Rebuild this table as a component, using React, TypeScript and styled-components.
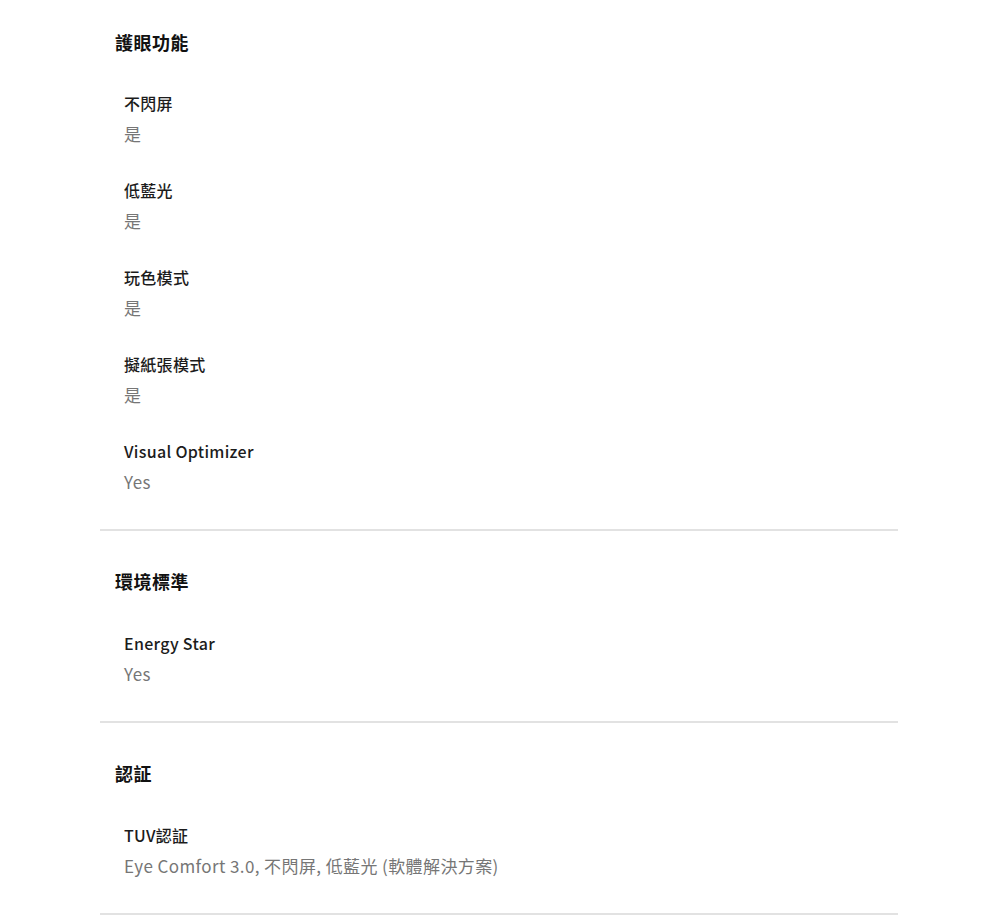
import React from 'react';
import styled, { createGlobalStyle } from 'styled-components';

// --- Data ---
const specSections = [
  {
    title: '護眼功能',
    items: [
      { label: '不閃屏', value: '是' },
      { label: '低藍光', value: '是' },
      { label: '玩色模式', value: '是' },
      { label: '擬紙張模式', value: '是' },
      { label: 'Visual Optimizer', value: 'Yes' },
    ],
  },
  {
    title: '環境標準',
    items: [{ label: 'Energy Star', value: 'Yes' }],
  },
  {
    title: '認証',
    items: [{ label: 'TUV認証', value: 'Eye Comfort 3.0, 不閃屏, 低藍光 (軟體解決方案)' }],
  },
];

// --- Styled Components ---
const GlobalStyle = createGlobalStyle`
  body {
    margin: 0;
    background: #fff;
    font-family: "Noto Sans CJK TC", "Noto Sans", sans-serif;
  }
`;

const Page = styled.div`
  width: 798px;
  margin-left: 100px;
`;

const Section = styled.section`
  padding: 36px 0 35px;
  border-bottom: 2px solid #e2e2e2;

  &:first-child {
    padding-top: 28px;
  }
`;

const SectionTitle = styled.h3`
  margin: 0 0 35px 15px;
  font-size: 18px;
  line-height: 28px;
  font-weight: 700;
  letter-spacing: 0.5px;
  color: #111;

  ${Section}:not(:first-child) & {
    margin-bottom: 36px;
  }
`;

const ItemList = styled.div`
  display: flex;
  flex-direction: column;
  gap: 32px;
  padding-left: 24px;
`;

const Item = styled.div`
  display: flex;
  flex-direction: column;
  gap: 7px;
`;

const Label = styled.div`
  font-size: 16px;
  line-height: 24px;
  font-weight: 500;
  letter-spacing: 0.3px;
  color: #1c1c1c;
`;

const Value = styled.div`
  font-size: 17px;
  line-height: 24px;
  font-weight: 400;
  color: #767676;
  letter-spacing: 0.4px;
`;

export default function App() {
  return (
    <>
      <GlobalStyle />
      <Page>
        {specSections.map((section) => (
          <Section key={section.title}>
            <SectionTitle>{section.title}</SectionTitle>
            <ItemList>
              {section.items.map((item) => (
                <Item key={item.label}>
                  <Label>{item.label}</Label>
                  <Value>{item.value}</Value>
                </Item>
              ))}
            </ItemList>
          </Section>
        ))}
      </Page>
    </>
  );
}
